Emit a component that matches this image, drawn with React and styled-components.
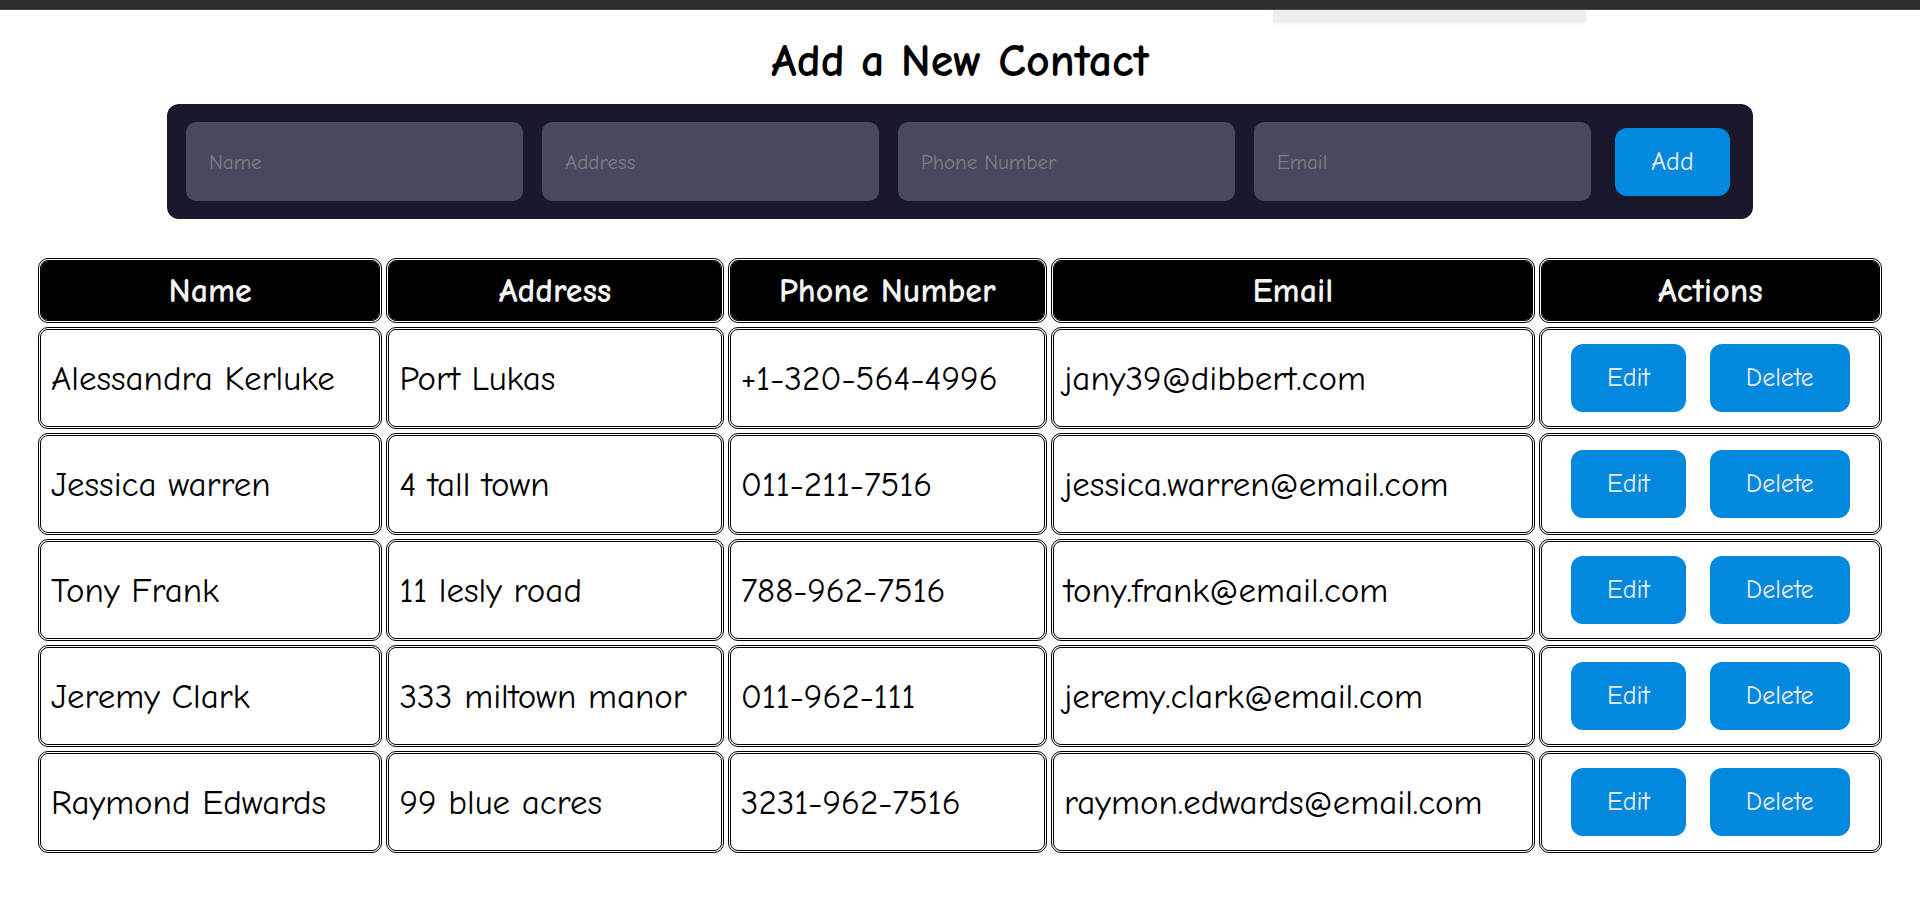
import React, { useState } from 'react';
import styled, { createGlobalStyle } from 'styled-components';

const GlobalStyle = createGlobalStyle`
  * {
    box-sizing: border-box;
  }
  body {
    margin: 0;
    background: #ffffff;
    font-family: "Comic Sans MS", "Comic Neue", "Open Sans", sans-serif;
    color: #000000;
  }
`;

const Page = styled.div`
  position: relative;
  min-height: 899px;
  padding-bottom: 40px;
`;

const TopBar = styled.div`
  height: 10px;
  background: #2c2c2c;
  border-bottom: 1px solid #4a4a4a;
`;

/* the little floating tab that hangs under the bar */
const FloatingTab = styled.div`
  position: absolute;
  top: 10px;
  left: 1273px;
  width: 313px;
  height: 12px;
  background: #efefef;
  box-shadow: 0 2px 3px rgba(0, 0, 0, 0.06);
`;

const Title = styled.h1`
  margin: 25px 0 15px;
  text-align: center;
  font-size: 46px;
  line-height: 54px;
  font-weight: 700;
`;

const Form = styled.form`
  width: 1586px;
  height: 115px;
  margin: 0 auto;
  padding: 0 23px 0 19px;
  display: flex;
  align-items: center;
  gap: 19px;
  background: #181a2c;
  border-radius: 12px;
`;

const Input = styled.input`
  width: 337px;
  height: 79px;
  padding: 0 23px;
  border: none;
  border-radius: 10px;
  background: #474a5e;
  color: #e6e6e6;
  font-family: inherit;
  font-size: 21px;
  outline: none;

  &::placeholder {
    color: #7e7e82;
  }
`;

const Button = styled.button`
  height: 68px;
  padding: 0 36px;
  border: none;
  border-radius: 12px;
  background: #0288dc;
  color: #ececec;
  font-family: inherit;
  font-size: 26px;
  cursor: pointer;
  margin-left: ${(p) => (p.$push ? '5px' : '0')};
`;

const TableWrap = styled.div`
  padding: 0 34px;
  margin-top: 35px;
`;

const Table = styled.table`
  width: 100%;
  table-layout: fixed;
  border-collapse: separate;
  border-spacing: 4px;
`;

const Th = styled.th`
  width: ${(p) => p.$w}px;
  height: 65px;
  padding: 0 10px;
  background: #000000;
  background-clip: padding-box;
  border: 3px double #000000;
  border-radius: 10px;
  color: #f4f4f4;
  font-size: 34px;
  font-weight: 700;
  text-align: center;
`;

const Td = styled.td`
  height: 102px;
  padding: 0 10px;
  border: 3px double #000000;
  border-radius: 10px;
  font-size: 35px;
  text-align: left;
  white-space: nowrap;
  overflow: hidden;
`;

const Actions = styled.div`
  display: flex;
  justify-content: center;
  gap: 24px;
`;

const columns = [
  { label: 'Name', width: 344 },
  { label: 'Address', width: 337 },
  { label: 'Phone Number', width: 319 },
  { label: 'Email', width: 483 },
  { label: 'Actions', width: 343 },
];

const initialContacts = [
  { id: 1, name: 'Alessandra Kerluke', address: 'Port Lukas', phone: '+1-320-564-4996', email: 'jany39@dibbert.com' },
  { id: 2, name: 'Jessica warren', address: '4 tall town', phone: '011-211-7516', email: 'jessica.warren@email.com' },
  { id: 3, name: 'Tony Frank', address: '11 lesly road', phone: '788-962-7516', email: 'tony.frank@email.com' },
  { id: 4, name: 'Jeremy Clark', address: '333 miltown manor', phone: '011-962-111', email: 'jeremy.clark@email.com' },
  { id: 5, name: 'Raymond Edwards', address: '99 blue acres', phone: '3231-962-7516', email: 'raymon.edwards@email.com' },
];

const App = () => {
  const [contacts, setContacts] = useState(initialContacts);
  const [form, setForm] = useState({ name: '', address: '', phone: '', email: '' });

  const handleChange = (field) => (e) => setForm({ ...form, [field]: e.target.value });

  const handleAdd = (e) => {
    e.preventDefault();
    if (!form.name) return;
    setContacts([...contacts, { id: Date.now(), ...form }]);
    setForm({ name: '', address: '', phone: '', email: '' });
  };

  const handleDelete = (id) => setContacts(contacts.filter((c) => c.id !== id));

  return (
    <Page>
      <GlobalStyle />
      <TopBar />
      <FloatingTab />
      <Title>Add a New Contact</Title>

      <Form onSubmit={handleAdd}>
        <Input placeholder="Name" value={form.name} onChange={handleChange('name')} />
        <Input placeholder="Address" value={form.address} onChange={handleChange('address')} />
        <Input placeholder="Phone Number" value={form.phone} onChange={handleChange('phone')} />
        <Input placeholder="Email" value={form.email} onChange={handleChange('email')} />
        <Button type="submit" $push>Add</Button>
      </Form>

      <TableWrap>
        <Table>
          <thead>
            <tr>
              {columns.map((col) => (
                <Th key={col.label} $w={col.width}>{col.label}</Th>
              ))}
            </tr>
          </thead>
          <tbody>
            {contacts.map((contact) => (
              <tr key={contact.id}>
                <Td>{contact.name}</Td>
                <Td>{contact.address}</Td>
                <Td>{contact.phone}</Td>
                <Td>{contact.email}</Td>
                <Td>
                  <Actions>
                    <Button type="button">Edit</Button>
                    <Button type="button" onClick={() => handleDelete(contact.id)}>Delete</Button>
                  </Actions>
                </Td>
              </tr>
            ))}
          </tbody>
        </Table>
      </TableWrap>
    </Page>
  );
};

export default App;
